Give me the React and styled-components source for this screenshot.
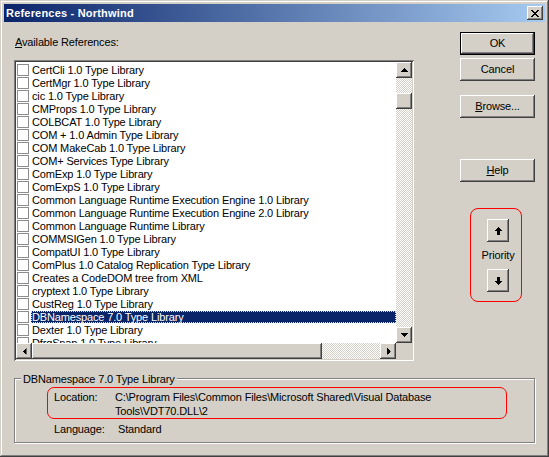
import React from "react";
import styled, { createGlobalStyle } from "styled-components";

const GlobalStyle = createGlobalStyle`
  html, body {
    margin: 0;
    padding: 0;
    background: #d4d0c8;
    overflow: hidden;
  }
  body {
    font-family: "Liberation Sans", Arial, sans-serif;
    font-size: 11px;
    letter-spacing: -0.15px;
    color: #000;
  }
`;

const raised = `
  box-shadow: inset -1px -1px #404040, inset 1px 1px #ffffff,
    inset -2px -2px #808080, inset 2px 2px #d4d0c8;
`;

const checker = `
  background: repeating-conic-gradient(#d4d0c8 0% 25%, #ffffff 0% 50%) 0 0 / 2px 2px;
`;

const Window = styled.div`
  width: 549px;
  height: 457px;
  box-sizing: border-box;
  padding: 4px;
  background: #d4d0c8;
  box-shadow: inset -1px -1px #404040, inset 1px 1px #d4d0c8,
    inset -2px -2px #808080, inset 2px 2px #ffffff;
  display: flex;
  flex-direction: column;
`;

const TitleBar = styled.div`
  height: 18px;
  display: flex;
  align-items: center;
  justify-content: space-between;
  padding: 0 2px 0 2px;
  background: linear-gradient(90deg, #0a246a, #a6caf0);
`;

const TitleText = styled.span`
  color: #fff;
  font-weight: bold;
  font-size: 11px;
  letter-spacing: 0.2px;
  padding-left: 0;
  white-space: nowrap;
`;

const CloseButton = styled.div`
  width: 16px;
  height: 14px;
  background: #d4d0c8;
  ${raised}
  display: flex;
  align-items: center;
  justify-content: center;
`;

const Client = styled.div`
  flex: 1;
  display: grid;
  grid-template-columns: 400px 75px;
  grid-template-rows: auto 1fr;
  column-gap: 46px;
  row-gap: 17px;
  padding: 10px;
`;

const LeftColumn = styled.div`
  display: flex;
  flex-direction: column;
`;

const FieldLabel = styled.div`
  line-height: 13px;
  margin-top: 4px;
  margin-bottom: 11px;
  padding-left: 1px;
`;

const ListBox = styled.div`
  width: 400px;
  height: 301px;
  box-sizing: border-box;
  padding: 2px;
  background: #fff;
  box-shadow: inset 1px 1px #808080, inset -1px -1px #ffffff,
    inset 2px 2px #404040, inset -2px -2px #d4d0c8;
  display: grid;
  grid-template-columns: 1fr 16px;
  grid-template-rows: 1fr 16px;
`;

const Rows = styled.div`
  overflow: hidden;
  padding-top: 1px;
`;

const Row = styled.div`
  height: 13px;
  display: flex;
  padding-left: 1px;
`;

const CheckBox = styled.div`
  width: 12px;
  height: 12px;
  margin-top: 1px;
  margin-right: 2px;
  box-sizing: border-box;
  border: 1px solid #8c8c8c;
  background: #fff;
  flex-shrink: 0;
`;

const ItemText = styled.div`
  flex: 1;
  height: 12px;
  margin-top: 1px;
  padding-left: 1px;
  line-height: 12px;
  white-space: nowrap;
  background: ${(p) => (p.$selected ? "#0a246a" : "transparent")};
  color: ${(p) => (p.$selected ? "#fff" : "#000")};
  outline: ${(p) => (p.$selected ? "1px dotted #f5db95" : "none")};
  outline-offset: -1px;
`;

const VScroll = styled.div`
  display: flex;
  flex-direction: column;
  ${checker}
`;

const HScroll = styled.div`
  display: flex;
  ${checker}
`;

const Corner = styled.div`
  background: #d4d0c8;
`;

const ScrollButton = styled.div`
  width: 16px;
  height: 16px;
  flex-shrink: 0;
  background: #d4d0c8;
  ${raised}
  display: flex;
  align-items: center;
  justify-content: center;
`;

const Thumb = styled.div`
  flex-shrink: 0;
  width: ${(p) => p.$w}px;
  height: ${(p) => p.$h}px;
  margin: ${(p) => (p.$vertical ? `${p.$offset}px 0 0 0` : `0 0 0 ${p.$offset}px`)};
  background: #d4d0c8;
  ${raised}
`;

const Track = styled.div`
  flex: 1;
`;

const ArrowSvg = styled.svg`
  display: block;
  transform: rotate(${(p) => p.$rot}deg);
`;

const RightColumn = styled.div`
  display: flex;
  flex-direction: column;
`;

const Button = styled.div`
  width: 75px;
  height: 23px;
  box-sizing: border-box;
  margin-top: ${(p) => p.$mt || 0}px;
  background: #d4d0c8;
  border: ${(p) => (p.$default ? "1px solid #000" : "none")};
  ${raised}
  display: flex;
  align-items: center;
  justify-content: center;
  line-height: 13px;
`;

const PriorityBox = styled.div`
  margin-top: 26px;
  margin-left: 10px;
  width: 52px;
  height: 94px;
  box-sizing: border-box;
  border: 1px solid #ff0000;
  border-radius: 8px;
  padding: 10px 0 0 4px;
  display: flex;
  flex-direction: column;
  align-items: center;
`;

const SmallButton = styled.div`
  width: 22px;
  height: 23px;
  background: #d4d0c8;
  ${raised}
  display: flex;
  align-items: center;
  justify-content: center;
`;

const PriorityLabel = styled.div`
  line-height: 13px;
  margin: 7px 0;
`;

const GroupBox = styled.div`
  grid-column: 1 / -1;
  position: relative;
  height: 65px;
  box-sizing: border-box;
  border: 1px solid #808080;
  box-shadow: inset 1px 1px #ffffff, 1px 1px #ffffff;
  padding: 8px 0 0 32px;
`;

const Legend = styled.div`
  position: absolute;
  top: -6px;
  left: 6px;
  padding: 0 2px;
  line-height: 13px;
  background: #d4d0c8;
  white-space: nowrap;
`;

const LocationBox = styled.div`
  width: 460px;
  height: 32px;
  box-sizing: border-box;
  border: 1px solid #ff0000;
  border-radius: 7px;
  padding: 2px 0 0 6px;
`;

const InfoRow = styled.div`
  display: grid;
  grid-template-columns: ${(p) => p.$labelWidth}px 1fr;
  line-height: 14px;
  margin-top: ${(p) => p.$mt || 0}px;
  padding-left: ${(p) => p.$pl || 0}px;
`;

const items = [
  "CertCli 1.0 Type Library",
  "CertMgr 1.0 Type Library",
  "cic 1.0 Type Library",
  "CMProps 1.0 Type Library",
  "COLBCAT 1.0 Type Library",
  "COM + 1.0 Admin Type Library",
  "COM MakeCab 1.0 Type Library",
  "COM+ Services Type Library",
  "ComExp 1.0 Type Library",
  "ComExpS 1.0 Type Library",
  "Common Language Runtime Execution Engine 1.0 Library",
  "Common Language Runtime Execution Engine 2.0 Library",
  "Common Language Runtime Library",
  "COMMSIGen 1.0 Type Library",
  "CompatUI 1.0 Type Library",
  "ComPlus 1.0 Catalog Replication Type Library",
  "Creates a CodeDOM tree from XML",
  "cryptext 1.0 Type Library",
  "CustReg 1.0 Type Library",
  "DBNamespace 7.0 Type Library",
  "Dexter 1.0 Type Library",
  "DfrgSnap 1.0 Type Library",
];

const SELECTED = 19;

// small scroll arrow, drawn pointing up then rotated
const Arrow = ({ rot = 0 }) => (
  <ArrowSvg width="7" height="4" viewBox="0 0 7 4" $rot={rot} shapeRendering="crispEdges">
    <path d="M3 0h1v1h-1z M2 1h3v1h-3z M1 2h5v1h-5z M0 3h7v1h-7z" fill="#000" />
  </ArrowSvg>
);

const StemArrow = ({ rot = 0 }) => (
  <ArrowSvg width="7" height="8" viewBox="0 0 7 8" $rot={rot} shapeRendering="crispEdges">
    <path d="M3 0h1v1h-1z M2 1h3v1h-3z M1 2h5v1h-5z M0 3h7v1h-7z M2 4h3v4h-3z" fill="#000" />
  </ArrowSvg>
);

const CloseIcon = () => (
  <svg width="8" height="7" viewBox="0 0 8 7" shapeRendering="crispEdges">
    <path
      d="M0 0h2v1h-2z M6 0h2v1h-2z M1 1h2v1h-2z M5 1h2v1h-2z M2 2h4v1h-4z M3 3h2v1h-2z M2 4h4v1h-4z M1 5h2v1h-2z M5 5h2v1h-2z M0 6h2v1h-2z M6 6h2v1h-2z"
      fill="#000"
    />
  </svg>
);

const App = () => {
  return (
    <>
      <GlobalStyle />
      <Window>
        <TitleBar>
          <TitleText>References - Northwind</TitleText>
          <CloseButton>
            <CloseIcon />
          </CloseButton>
        </TitleBar>
        <Client>
          <LeftColumn>
            <FieldLabel>
              <u>A</u>vailable References:
            </FieldLabel>
            <ListBox>
              <Rows>
                {items.map((name, i) => (
                  <Row key={name}>
                    <CheckBox />
                    <ItemText $selected={i === SELECTED}>{name}</ItemText>
                  </Row>
                ))}
              </Rows>
              <VScroll>
                <ScrollButton>
                  <Arrow rot={0} />
                </ScrollButton>
                <Thumb $vertical $w={16} $h={16} $offset={15} />
                <Track />
                <ScrollButton>
                  <Arrow rot={180} />
                </ScrollButton>
              </VScroll>
              <HScroll>
                <ScrollButton>
                  <Arrow rot={-90} />
                </ScrollButton>
                <Thumb $w={290} $h={16} $offset={0} />
                <Track />
                <ScrollButton>
                  <Arrow rot={90} />
                </ScrollButton>
              </HScroll>
              <Corner />
            </ListBox>
          </LeftColumn>
          <RightColumn>
            <Button $default>OK</Button>
            <Button $mt={3}>Cancel</Button>
            <Button $mt={14}>
              <span>
                <u>B</u>rowse...
              </span>
            </Button>
            <Button $mt={41}>
              <span>
                <u>H</u>elp
              </span>
            </Button>
            <PriorityBox>
              <SmallButton>
                <StemArrow rot={0} />
              </SmallButton>
              <PriorityLabel>Priority</PriorityLabel>
              <SmallButton>
                <StemArrow rot={180} />
              </SmallButton>
            </PriorityBox>
          </RightColumn>
          <GroupBox>
            <Legend>DBNamespace 7.0 Type Library</Legend>
            <LocationBox>
              <InfoRow $labelWidth={61}>
                <span>Location:</span>
                <span>
                  C:\Program Files\Common Files\Microsoft Shared\Visual Database
                  <br />
                  Tools\VDT70.DLL\2
                </span>
              </InfoRow>
            </LocationBox>
            <InfoRow $labelWidth={64} $mt={3} $pl={7}>
              <span>Language:</span>
              <span>Standard</span>
            </InfoRow>
          </GroupBox>
        </Client>
      </Window>
    </>
  );
};

export default App;
